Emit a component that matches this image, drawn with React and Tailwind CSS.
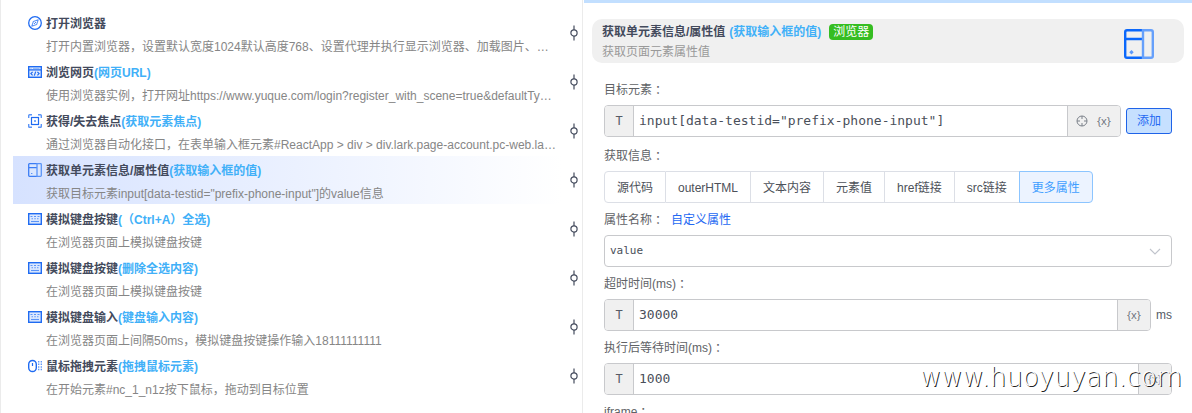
import React, { useState } from "react";

const BLUE = "#1f6bf2";
const LIGHT = "#7fadf9";

const CompassIcon = () => (
  <svg className="size-[14px] shrink-0" viewBox="0 0 14 14" fill="none">
    <circle cx="7" cy="7" r="6.3" stroke={BLUE} strokeWidth="1.3" />
    <path d="M10.2 3.8 8.6 8.6 3.8 10.2 5.4 5.4Z" stroke="#5b94f7" strokeWidth="1.1" strokeLinejoin="round" />
    <path d="M6.2 7.8 7.8 6.2" stroke={BLUE} strokeWidth="1" />
  </svg>
);

const WebIcon = () => (
  <svg className="size-[14px] shrink-0" viewBox="0 0 14 14" fill="none">
    <rect x="0.7" y="1.7" width="12.6" height="10.6" fill="#e3edfe" stroke={BLUE} strokeWidth="1.4" />
    <path d="M1 4.9h12" stroke={BLUE} strokeWidth="1.3" />
    <path d="M2.5 3.3h1M5 3.3h6.5" stroke={LIGHT} strokeWidth="1" />
    <path d="M4.6 6.8 2.9 8.6l1.7 1.8M9.4 6.8l1.7 1.8-1.7 1.8M7.7 6.6l-1.4 4" stroke={BLUE} strokeWidth="1.2" />
  </svg>
);

const FocusIcon = () => (
  <svg className="size-[14px] shrink-0" viewBox="0 0 14 14" fill="none">
    <path
      d="M.7 4V1.6Q.7.7 1.6.7H4M10 .7h2.4q.9 0 .9.9V4M13.3 10v2.4q0 .9-.9.9H10M4 13.3H1.6q-.9 0-.9-.9V10"
      stroke="#5b94f7"
      strokeWidth="1.4"
    />
    <rect x="3.5" y="3.5" width="7" height="7" stroke={BLUE} strokeWidth="1.2" />
    <rect x="6" y="6" width="2" height="2" fill={LIGHT} />
  </svg>
);

const PanelIcon = () => (
  <svg className="size-[14px] shrink-0" viewBox="0 0 14 14" fill="none">
    <rect x="0.7" y="0.7" width="12.6" height="12.6" rx="0.8" fill="#dbe7fe" />
    <path d="M9 .7H1.5Q.7.7.7 1.5v11q0 .8.8.8H9M.7 4.6H9" stroke="#3b7df5" strokeWidth="1.3" />
    <path d="M9 .7h3.5q.8 0 .8.8v11q0 .8-.8.8H9Z" stroke="#5b94f7" strokeWidth="1.3" />
    <path d="M3 10.5h1.4" stroke="#5b94f7" strokeWidth="1.2" />
  </svg>
);

const LargePanelIcon = () => (
  <svg className="mt-1.5 size-[30px] shrink-0" viewBox="0 0 30 30" fill="none">
    <path d="M18 1.2H3Q1.2 1.2 1.2 3v24q0 1.8 1.8 1.8h15M1.2 10H18" stroke="#0b68fb" strokeWidth="2.4" />
    <path d="M19 1.2h8q1.8 0 1.8 1.8v24q0 1.8-1.8 1.8h-8Z" stroke="#66a0fb" strokeWidth="2.4" />
    <path d="m7.5 21 2.2 2.2-2.2 2.2-2.2-2.2Z" fill="#5b99fb" />
  </svg>
);

const KeyboardIcon = () => (
  <svg className="size-[14px] shrink-0" viewBox="0 0 14 14" fill="none">
    <rect x="0.7" y="1.7" width="12.6" height="10.6" fill="#dce8fe" stroke={BLUE} strokeWidth="1.4" />
    <path d="M2.5 4.5h2M6 4.5h2M9.5 4.5h2M3.5 6.8h1.5M6.3 6.8h1.5M9 6.8h1.5" stroke="#5b94f7" strokeWidth="1.1" />
    <path d="M3 9.5h8" stroke="#5b94f7" strokeWidth="1.1" />
  </svg>
);

const MouseIcon = () => (
  <svg className="size-[14px] shrink-0" viewBox="0 0 14 14" fill="none">
    <rect x="0.7" y="1.5" width="7.6" height="11" rx="3.8" stroke={BLUE} strokeWidth="1.4" />
    <path d="M4.5 4v3" stroke={BLUE} strokeWidth="1.2" />
    <path d="M10.7 2v10M13.3 2v10" stroke="#5b94f7" strokeWidth="1.3" strokeDasharray="1.5 1.1" />
  </svg>
);

const CommitIcon = () => (
  <svg className="h-4 w-2 shrink-0" viewBox="0 0 8 16" fill="none" stroke="#454c5e" strokeWidth="1.2">
    <circle cx="4" cy="8" r="3.1" />
    <path d="M4 0.5V5M4 11v4.5" />
  </svg>
);

const AimIcon = () => (
  <svg className="size-3" viewBox="0 0 12 12" fill="none" stroke="#7b8089" strokeWidth="1">
    <circle cx="6" cy="6" r="5" />
    <path d="M6 1v3M6 8v3M1 6h3M8 6h3" />
  </svg>
);

const steps = [
  {
    icon: CompassIcon,
    title: "打开浏览器",
    desc: "打开内置浏览器，设置默认宽度1024默认高度768、设置代理并执行显示浏览器、加载图片、设置窗口大小",
  },
  {
    icon: WebIcon,
    title: "浏览网页",
    note: "(网页URL)",
    desc: "使用浏览器实例，打开网址https://www.yuque.com/login?register_with_scene=true&defaultType=phone",
  },
  {
    icon: FocusIcon,
    title: "获得/失去焦点",
    note: "(获取元素焦点)",
    desc: "通过浏览器自动化接口，在表单输入框元素#ReactApp > div > div.lark.page-account.pc-web.lark-login",
  },
  {
    icon: PanelIcon,
    title: "获取单元素信息/属性值",
    note: "(获取输入框的值)",
    desc: '获取目标元素input[data-testid="prefix-phone-input"]的value信息',
  },
  { icon: KeyboardIcon, title: "模拟键盘按键", note: "(（Ctrl+A）全选)", desc: "在浏览器页面上模拟键盘按键" },
  { icon: KeyboardIcon, title: "模拟键盘按键", note: "(删除全选内容)", desc: "在浏览器页面上模拟键盘按键" },
  {
    icon: KeyboardIcon,
    title: "模拟键盘输入",
    note: "(键盘输入内容)",
    desc: "在浏览器页面上间隔50ms，模拟键盘按键操作输入18111111111",
  },
  {
    icon: MouseIcon,
    title: "鼠标拖拽元素",
    note: "(拖拽鼠标元素)",
    desc: "在开始元素#nc_1_n1z按下鼠标，拖动到目标位置",
  },
];

const infoTypes = ["源代码", "outerHTML", "文本内容", "元素值", "href链接", "src链接", "更多属性"];

const Colon = () => <span className="font-['Noto_Sans_CJK_TC',sans-serif]">：</span>;

const FieldLabel = ({ htmlFor, children }) => (
  <label htmlFor={htmlFor} className="flex h-8 items-center pt-0.5 text-[#606266]">
    {children}
    <Colon />
  </label>
);

// Campo con prefijo T y botones al final
const TextField = ({ id, value, onChange, aim }) => (
  <div className="flex h-8 min-w-0 flex-1 overflow-hidden rounded border border-[#c8c9cc] bg-white">
    <button
      type="button"
      className="w-[29px] shrink-0 border-r border-[#c8c9cc] bg-[#f0f0f0] font-['DejaVu_Sans_Mono',monospace] text-xs text-[#565b66]"
    >
      T
    </button>
    <input
      id={id}
      value={value}
      onChange={(e) => onChange(e.target.value)}
      className="min-w-0 flex-1 px-[5px] font-['DejaVu_Sans_Mono',monospace] text-[13px] text-[#4a4f5a] outline-none"
    />
    <div className="flex shrink-0 items-center gap-2 border-l border-[#c8c9cc] bg-[#f0f0f0] px-2 text-[#6b7079]">
      {aim && (
        <button type="button" aria-label="拾取元素">
          <AimIcon />
        </button>
      )}
      <button type="button" className="w-4 text-center font-['Open_Sans',sans-serif] text-[11px]">
        {"{x}"}
      </button>
    </div>
  </div>
);

const App = () => {
  const [active, setActive] = useState(3);
  const [selector, setSelector] = useState('input[data-testid="prefix-phone-input"]');
  const [infoType, setInfoType] = useState("更多属性");
  const [attr, setAttr] = useState("value");
  const [timeout, setTimeoutMs] = useState("30000");
  const [delay, setDelay] = useState("1000");

  return (
    <div className="relative grid h-screen grid-cols-[583fr_609fr] overflow-hidden bg-white font-['Liberation_Sans','Noto_Sans_CJK_SC',sans-serif] text-xs [text-spacing-trim:space-all]">
      {/* Lista de pasos */}
      <ul className="flex min-w-0 flex-col gap-px border-x border-[#ebebeb] pt-[9px] pr-1 pl-3">
        {steps.map((step, i) => {
          const Icon = step.icon;
          return (
            <li key={i} className="flex h-12 shrink-0 items-center">
              <button
                type="button"
                onClick={() => setActive(i)}
                className={`flex h-full min-w-0 flex-1 gap-1 pt-0.5 pr-1 pl-[15px] text-left ${
                  i === active ? "bg-linear-to-r from-[#d6e2ff] to-white" : ""
                }`}
              >
                <span className="flex h-6 items-center">
                  <Icon />
                </span>
                <span className="min-w-0 flex-1 pt-px">
                  <span className="block truncate leading-6 font-bold text-[#434a5c]">
                    {step.title}
                    <span className="text-[#41b0f8]">{step.note}</span>
                  </span>
                  <span className="block truncate leading-[22px] text-[#868686]">{step.desc}</span>
                </span>
              </button>
              <span className="flex w-4 justify-end">
                <CommitIcon />
              </span>
            </li>
          );
        })}
      </ul>

      {/* Propiedades del paso */}
      <section className="flex min-w-0 flex-col">
        <div className="ml-px h-[3px] shrink-0 bg-[#c2dfff]" />
        <header className="mt-4 mr-2 ml-[9px] flex h-11 shrink-0 items-center justify-between rounded-[10px] bg-[#f0f0f0] pr-[30px] pl-2.5">
          <div className="pt-0.5">
            <h1 className="flex h-5 items-center gap-1 font-bold text-[#434a5c]">
              获取单元素信息/属性值
              <span className="text-[#41b0f8]">(获取输入框的值)</span>
              <span className="ml-1 h-4 rounded bg-[#35bd21] px-1 leading-4 font-normal text-white">浏览器</span>
            </h1>
            <p className="leading-5 text-[#999999]">获取页面元素属性值</p>
          </div>
          <LargePanelIcon />
        </header>

        <form className="mt-2.5 mr-5 ml-[21px]" onSubmit={(e) => e.preventDefault()}>
          <FieldLabel htmlFor="selector">目标元素</FieldLabel>
          <div className="mb-0.5 flex items-center gap-[5px]">
            <TextField id="selector" value={selector} onChange={setSelector} aim />
            <button
              type="button"
              className="h-[26px] w-[46px] shrink-0 rounded-[3px] border border-[#1f63e8] bg-[#c6e0ff] text-[#2468f2]"
            >
              添加
            </button>
          </div>

          <fieldset>
            <legend className="flex h-8 items-center pt-0.5 text-[#606266]">
              获取信息
              <Colon />
            </legend>
            <div className="flex">
              {infoTypes.map((type) => (
                <label
                  key={type}
                  className={`relative flex h-8 items-center border-y border-r px-3 pt-px whitespace-nowrap first:rounded-l first:border-l last:rounded-r ${
                    type === infoType
                      ? "-ml-px border-l border-[#8cc5ff] bg-[#ecf3ff] text-[#409eff]"
                      : "border-[#dcdfe6] text-[#4d5159]"
                  }`}
                >
                  <input
                    type="radio"
                    name="infoType"
                    className="sr-only"
                    checked={type === infoType}
                    onChange={() => setInfoType(type)}
                  />
                  {type}
                </label>
              ))}
            </div>
          </fieldset>

          <div className="flex items-center gap-[7px]">
            <FieldLabel htmlFor="attr">属性名称</FieldLabel>
            <a href="#custom" className="pt-0.5 text-[#2468f2]">
              自定义属性
            </a>
          </div>
          <div className="relative">
            <select
              id="attr"
              value={attr}
              onChange={(e) => setAttr(e.target.value)}
              className="block h-8 w-full appearance-none rounded border border-[#c8c9cc] bg-white px-[5px] font-['DejaVu_Sans_Mono',monospace] text-[11px] text-[#4a4f5a] outline-none"
            >
              <option>value</option>
            </select>
            <svg
              className="pointer-events-none absolute top-2.5 right-[11px] size-3"
              viewBox="0 0 12 12"
              fill="none"
              stroke="#c0c4cc"
              strokeWidth="1.1"
            >
              <path d="m1 4 5 5 5-5" />
            </svg>
          </div>

          <FieldLabel htmlFor="timeout">超时时间(ms)</FieldLabel>
          <div className="flex items-center gap-[5px] text-[#565b66]">
            <TextField id="timeout" value={timeout} onChange={setTimeoutMs} />
            <span>ms</span>
          </div>

          <FieldLabel htmlFor="delay">执行后等待时间(ms)</FieldLabel>
          <div className="flex">
            <TextField id="delay" value={delay} onChange={setDelay} />
          </div>

          <FieldLabel htmlFor="iframe">iframe</FieldLabel>
          <input id="iframe" className="h-8 w-full rounded border border-[#c8c9cc] px-[5px]" />
        </form>
      </section>

      {/* Marca de agua */}
      <p className="pointer-events-none absolute right-2.5 bottom-5 font-['DejaVu_Sans',sans-serif] text-[26px] leading-8 font-extralight text-white [text-shadow:1px_1px_0_#222]">
        www.huoyuyan.com
      </p>
    </div>
  );
};

export default App;
